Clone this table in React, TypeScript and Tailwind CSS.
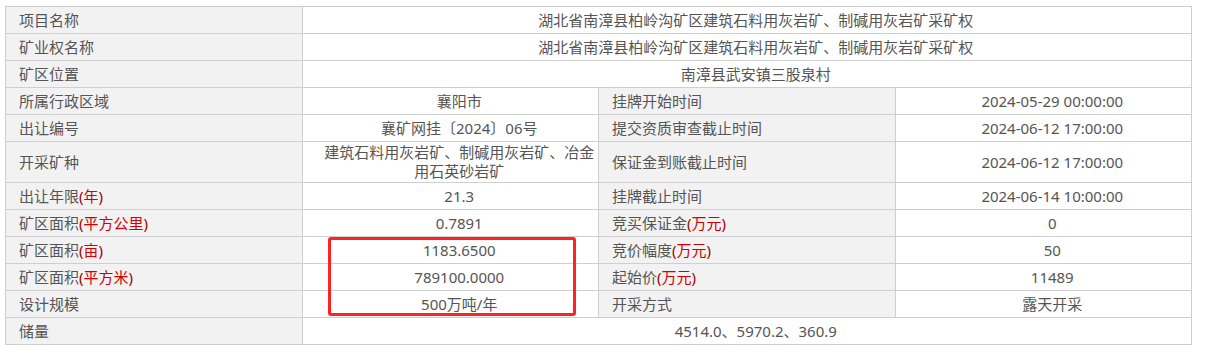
import React from 'react'

type Cell = { text: React.ReactNode; label?: boolean; span?: number }

const Unit = ({ u }: { u: string }) => (
  <span className="text-[#d40000]">
    <span className="text-[#a00000]">(</span>
    {u}
    <span className="text-[#a00000]">)</span>
  </span>
)

const rows: Cell[][] = [
  [{ text: '项目名称', label: true }, { text: '湖北省南漳县柏岭沟矿区建筑石料用灰岩矿、制碱用灰岩矿采矿权', span: 3 }],
  [{ text: '矿业权名称', label: true }, { text: '湖北省南漳县柏岭沟矿区建筑石料用灰岩矿、制碱用灰岩矿采矿权', span: 3 }],
  [{ text: '矿区位置', label: true }, { text: '南漳县武安镇三股泉村', span: 3 }],
  [
    { text: '所属行政区域', label: true },
    { text: '襄阳市' },
    { text: '挂牌开始时间', label: true },
    { text: '2024-05-29 00:00:00' },
  ],
  [
    { text: '出让编号', label: true },
    { text: '襄矿网挂〔2024〕06号' },
    { text: '提交资质审查截止时间', label: true },
    { text: '2024-06-12 17:00:00' },
  ],
  [
    { text: '开采矿种', label: true },
    { text: '建筑石料用灰岩矿、制碱用灰岩矿、冶金用石英砂岩矿' },
    { text: '保证金到账截止时间', label: true },
    { text: '2024-06-12 17:00:00' },
  ],
  [
    { text: <>出让年限<Unit u="年" /></>, label: true },
    { text: '21.3' },
    { text: '挂牌截止时间', label: true },
    { text: '2024-06-14 10:00:00' },
  ],
  [
    { text: <>矿区面积<Unit u="平方公里" /></>, label: true },
    { text: '0.7891' },
    { text: <>竞买保证金<Unit u="万元" /></>, label: true },
    { text: '0' },
  ],
  [
    { text: <>矿区面积<Unit u="亩" /></>, label: true },
    { text: '1183.6500' },
    { text: <>竞价幅度<Unit u="万元" /></>, label: true },
    { text: '50' },
  ],
  [
    { text: <>矿区面积<Unit u="平方米" /></>, label: true },
    { text: '789100.0000' },
    { text: <>起始价<Unit u="万元" /></>, label: true },
    { text: '11489' },
  ],
  [
    { text: '设计规模', label: true },
    { text: '500万吨/年' },
    { text: '开采方式', label: true },
    { text: '露天开采' },
  ],
  [{ text: '储量', label: true }, { text: '4514.0、5970.2、360.9', span: 3 }],
]

export default function App() {
  return (
    <div className="min-h-[350px] bg-white pt-[6px] pl-[5px] font-['Noto_Sans','Noto_Sans_CJK_SC',sans-serif] text-[15px] text-[#555]">
      <div className="relative w-[1187px]">
        <div className="grid grid-cols-4 border-l border-t border-[#cfcfcf]">
          {rows.map((row, i) =>
            row.map((c, j) => (
              <div
                key={`${i}-${j}`}
                className={
                  (c.label
                    ? 'bg-[#f2f2f2] justify-start pl-[13px] '
                    : c.span === 3
                      ? 'col-span-3 bg-white justify-center text-center pl-[38px] pr-[20px] '
                      : 'bg-white justify-center text-center pl-[21px] pr-[3px] ') +
                  'flex min-h-[27px] items-center border-b border-r border-[#cfcfcf] py-[1px] leading-[19px]'
                }
              >
                <span>{c.text}</span>
              </div>
            ))
          )}
        </div>
        {/* highlight drawn over the three area/scale values */}
        <div className="pointer-events-none absolute left-[323px] top-[231px] h-[79px] w-[248px] rounded-[3px] border-[3px] border-[#ff2222]" />
      </div>
    </div>
  )
}
